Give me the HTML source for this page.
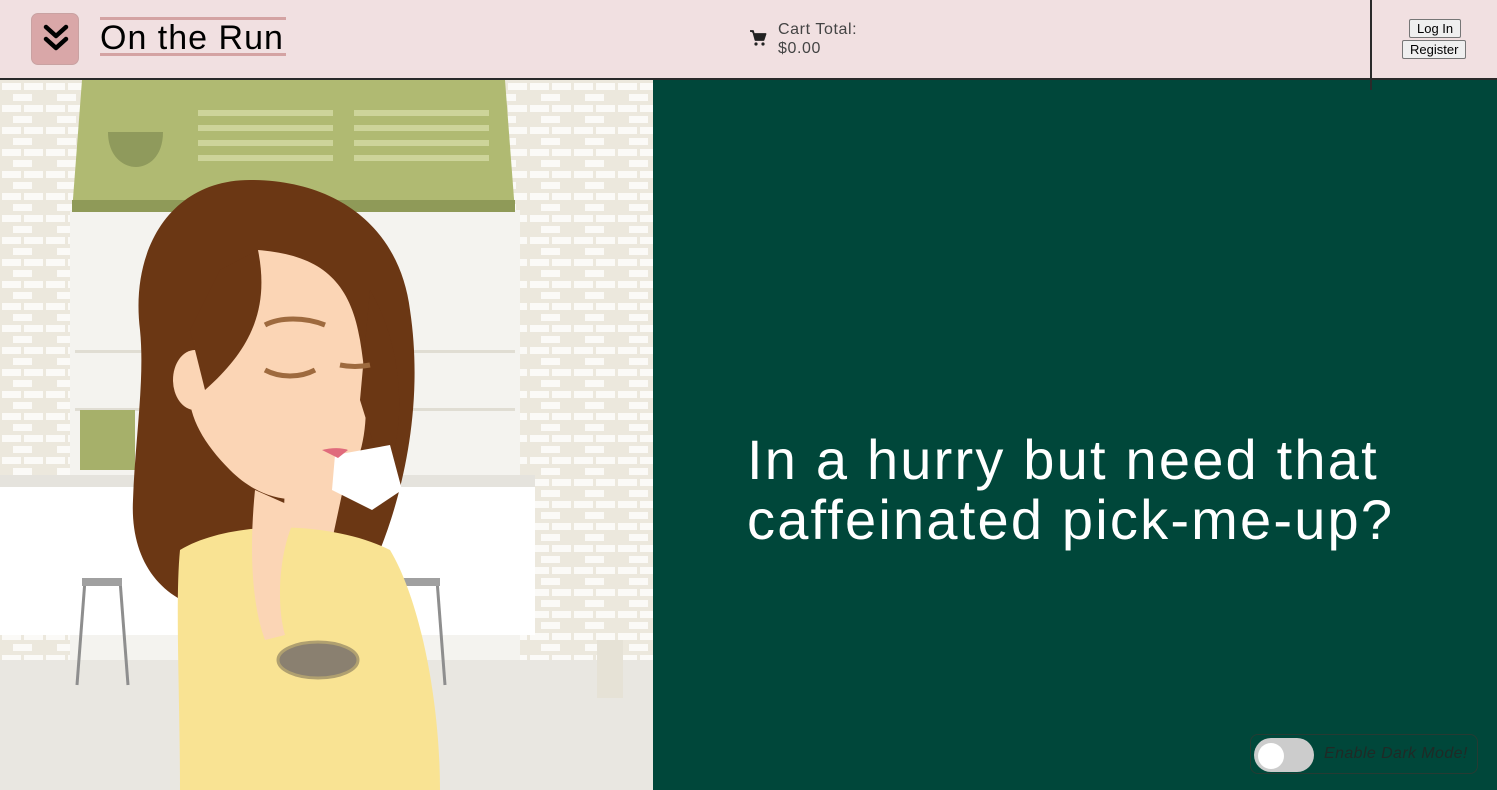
<!DOCTYPE html>
<html><head><meta charset="utf-8"><style>
*{margin:0;padding:0;box-sizing:border-box}
body{width:1497px;height:790px;overflow:hidden;background:#00473a;font-family:"Liberation Sans",sans-serif;position:relative}
.hdr{position:absolute;left:0;top:0;width:1497px;height:80px;background:#f1e0e1;border-bottom:2px solid #2a2a2a}
.menu{position:absolute;left:31px;top:13px;width:48px;height:52px;background:#d9a7a8;border:1px solid #c9a2a2;border-radius:7px}
.title{position:absolute;left:100px;top:17px;width:186px;height:39px;border-top:3px solid #d4a3a3;border-bottom:3px solid #d4a3a3;font-size:34px;line-height:36px;color:#000;letter-spacing:1px;white-space:nowrap}
.cart{position:absolute;left:778px;top:20px;font-size:16px;line-height:19px;color:#444;letter-spacing:0.6px}
.vline{position:absolute;left:1370px;top:0;width:2px;height:90px;background:#2a2a2a}
.btn{position:absolute;font-size:13px;background:#efefef;border:1px solid #767676;border-radius:2px;line-height:17px;padding:0 7px;color:#000}
.hero{position:absolute;left:747px;top:430px;color:#fff;font-size:56px;line-height:60px;letter-spacing:2.2px;font-family:"Liberation Sans",sans-serif;white-space:nowrap}
.toggle{position:absolute;left:1250px;top:734px;width:228px;height:40px;border:1px solid #253b33;border-radius:8px}
.tr{position:absolute;left:3px;top:3px;width:60px;height:34px;border-radius:17px;background:#cccccc}
.kn{position:absolute;left:4px;top:5px;width:26px;height:26px;border-radius:50%;background:#fff}
.tl{position:absolute;left:73px;top:10px;font-style:italic;font-size:16px;color:#1f2a26;letter-spacing:0.4px}
</style></head><body>
<svg style="position:absolute;left:0;top:80px" width="653" height="710" viewBox="0 0 653 710">
<defs><pattern id="br" width="44" height="22" patternUnits="userSpaceOnUse"><rect width="44" height="22" fill="#ece8dd"/><rect x="2" y="3" width="19" height="7" fill="#fbfaf7"/><rect x="24" y="3" width="19" height="7" fill="#fbfaf7"/><rect x="13" y="14" width="19" height="7" fill="#fbfaf7"/></pattern></defs>
<rect width="653" height="710" fill="url(#br)"/>
<rect x="70" y="130" width="450" height="460" fill="#f4f3ef"/>
<polygon points="82,0 505,0 515,132 72,132" fill="#b0ba72"/>
<rect x="72" y="120" width="443" height="12" fill="#8f9a58"/>
<g fill="#cdd49a"><rect x="198" y="30" width="135" height="6"/><rect x="198" y="45" width="135" height="6"/><rect x="198" y="60" width="135" height="6"/><rect x="198" y="75" width="135" height="6"/><rect x="354" y="30" width="135" height="6"/><rect x="354" y="45" width="135" height="6"/><rect x="354" y="60" width="135" height="6"/><rect x="354" y="75" width="135" height="6"/></g>
<path d="M108 52h55c0 25-15 35-27 35s-28-10-28-35z" fill="#8f9a5c"/>
<rect x="75" y="270" width="440" height="3" fill="#e0ddd3"/><rect x="75" y="328" width="440" height="3" fill="#e0ddd3"/>
<rect x="80" y="330" width="55" height="60" fill="#a6b06a"/>
<rect x="0" y="395" width="535" height="160" fill="#fff"/>
<rect x="0" y="395" width="535" height="12" fill="#e5e3dd"/>
<rect x="0" y="580" width="653" height="130" fill="#e9e7e1"/>
<g stroke="#8e8e8e" stroke-width="3"><line x1="85" y1="500" x2="77" y2="605"/><line x1="120" y1="500" x2="128" y2="605"/><line x1="405" y1="500" x2="397" y2="605"/><line x1="437" y1="500" x2="445" y2="605"/></g>
<rect x="82" y="498" width="40" height="8" fill="#a0a0a0"/><rect x="400" y="498" width="40" height="8" fill="#a0a0a0"/>
<rect x="597" y="560" width="26" height="58" fill="#e6e2d6"/>
<path d="M140 250C130 170 170 100 250 100 340 100 400 150 410 230 425 330 400 420 380 470 360 520 260 540 210 530 160 520 130 480 133 420 135 360 145 300 140 250z" fill="#6b3714"/>
<path d="M258 170C320 175 350 200 360 260 370 320 370 380 340 405 300 430 260 420 230 390 200 360 185 330 190 300 200 280 240 260 258 170z" fill="#fbd5b5"/>
<ellipse cx="195" cy="300" rx="22" ry="30" fill="#fbd5b5"/>
<path d="M258 170C270 230 250 270 205 310L190 250 220 190z" fill="#6b3714"/>
<path d="M370 210C400 260 410 340 385 400L360 320z" fill="#6b3714"/>
<path d="M265 345C290 395 290 440 270 460L330 470 345 400z" fill="#fbd5b5"/>
<path d="M180 470C230 440 330 440 390 470 420 520 440 620 440 710L180 710C180 620 175 520 180 470z" fill="#f9e393"/>
<path d="M255 410 C250 460 250 520 265 560 L285 555 C275 520 280 460 300 430z" fill="#fbd5b5"/>
<ellipse cx="318" cy="580" rx="40" ry="18" fill="#8a8070" stroke="#b0a070" stroke-width="3"/>
<path d="M335 375l55-10 12 45-30 20-40-20z" fill="#fff"/>
<path d="M265 245c15-8 40-8 60 0M265 290c15 8 35 8 50 0M340 285c10 2 20 2 30 0" stroke="#9e6a3e" stroke-width="5" fill="none"/>
<path d="M322 370c8-2 18-3 26 0l-10 8z" fill="#e06b7c"/>
</svg>
<div class="hdr">
<div class="menu"><svg width="48" height="52" viewBox="0 0 48 52"><path d="M14 13l10 9 10-9M14 25l10 9 10-9" stroke="#000" stroke-width="4.5" fill="none" stroke-linecap="round" stroke-linejoin="round"/></svg></div>
<div class="title">On the Run</div>
<svg style="position:absolute;left:749px;top:29px" width="18" height="18" viewBox="0 0 18 18"><path d="M1 2h3l2.5 9h8l2-6H5.5" fill="#222" stroke="#222" stroke-width="1.8" stroke-linejoin="round"/><circle cx="7" cy="15" r="1.6" fill="#222"/><circle cx="14" cy="15" r="1.6" fill="#222"/></svg>
<div class="cart">Cart Total:<br>$0.00</div>
<div class="btn" style="left:1409px;top:19px">Log In</div>
<div class="btn" style="left:1402px;top:40px">Register</div>
</div>
<div class="vline"></div>
<div class="hero">In a hurry but need that<br>caffeinated pick-me-up?</div>
<div class="toggle"><div class="tr"><div class="kn"></div></div><div class="tl">Enable Dark Mode!</div></div>
</body></html>
